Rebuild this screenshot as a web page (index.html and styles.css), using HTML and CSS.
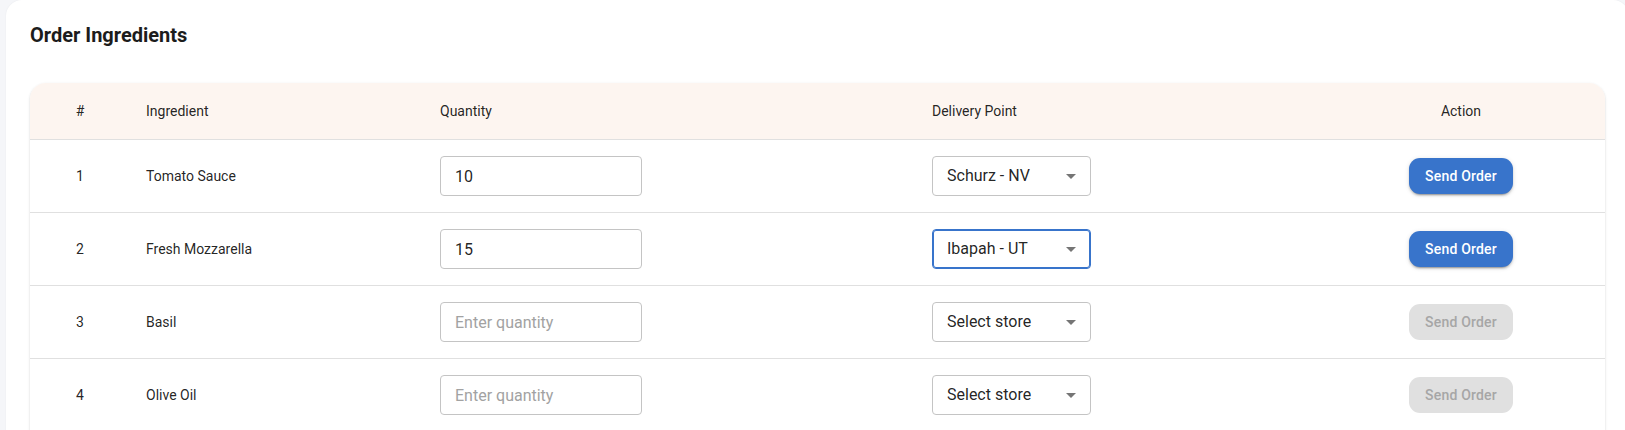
FILE: index.html
```html
<!DOCTYPE html>
<html lang="en">
<head>
<meta charset="utf-8">
<title>Order Ingredients</title>
<link rel="stylesheet" href="styles.css">
</head>
<body>
<div class="card">
  <h2 class="title">Order Ingredients</h2>
  <div class="table-wrap">
    <table class="orders">
      <colgroup>
        <col class="c-num"><col class="c-ing"><col class="c-qty"><col class="c-del"><col class="c-act">
      </colgroup>
      <thead>
        <tr>
          <th class="center">#</th>
          <th>Ingredient</th>
          <th>Quantity</th>
          <th>Delivery Point</th>
          <th class="center">Action</th>
        </tr>
      </thead>
      <tbody>
        <tr>
          <td class="center">1</td>
          <td>Tomato Sauce</td>
          <td><input class="qty" type="text" value="10" placeholder="Enter quantity"></td>
          <td><div class="select"><span>Schurz - NV</span><svg class="arrow" viewBox="0 0 24 24" width="24" height="24"><path d="M7 10l5 5 5-5z"/></svg></div></td>
          <td class="center"><button class="btn">Send Order</button></td>
        </tr>
        <tr>
          <td class="center">2</td>
          <td>Fresh Mozzarella</td>
          <td><input class="qty" type="text" value="15" placeholder="Enter quantity"></td>
          <td><div class="select focused"><span>Ibapah - UT</span><svg class="arrow" viewBox="0 0 24 24" width="24" height="24"><path d="M7 10l5 5 5-5z"/></svg></div></td>
          <td class="center"><button class="btn">Send Order</button></td>
        </tr>
        <tr>
          <td class="center">3</td>
          <td>Basil</td>
          <td><input class="qty" type="text" value="" placeholder="Enter quantity"></td>
          <td><div class="select"><span>Select store</span><svg class="arrow" viewBox="0 0 24 24" width="24" height="24"><path d="M7 10l5 5 5-5z"/></svg></div></td>
          <td class="center"><button class="btn" disabled>Send Order</button></td>
        </tr>
        <tr>
          <td class="center">4</td>
          <td>Olive Oil</td>
          <td><input class="qty" type="text" value="" placeholder="Enter quantity"></td>
          <td><div class="select"><span>Select store</span><svg class="arrow" viewBox="0 0 24 24" width="24" height="24"><path d="M7 10l5 5 5-5z"/></svg></div></td>
          <td class="center"><button class="btn" disabled>Send Order</button></td>
        </tr>
      </tbody>
    </table>
  </div>
</div>
</body>
</html>
```

FILE: styles.css
```css
html, body {
  margin: 0;
  padding: 0;
}
body {
  background: #f5f6f9;
  font-family: Roboto, "Liberation Sans", Arial, sans-serif;
  color: rgba(0, 0, 0, 0.87);
  overflow: hidden;
}
.card {
  margin-left: 6px;
  width: 1623px;
  box-sizing: border-box;
  background: #ffffff;
  border-radius: 16px;
  padding: 19px 24px 24px 24px;
  box-shadow: 0 0 2px rgba(0, 0, 0, 0.06);
}
.title {
  margin: 0 0 32px 0;
  font-size: 20px;
  line-height: 32px;
  font-weight: 700;
  color: #1c1c1c;
}
.table-wrap {
  background: #ffffff;
  border-radius: 16px;
  overflow: hidden;
  padding-bottom: 24px;
  box-shadow: 0px 2px 1px -1px rgba(0,0,0,0.2), 0px 1px 1px 0px rgba(0,0,0,0.14), 0px 1px 3px 0px rgba(0,0,0,0.12);
}
.orders {
  width: 1575px;
  border-collapse: separate;
  border-spacing: 0;
  table-layout: fixed;
}
.c-num { width: 100px; }
.c-ing { width: 294px; }
.c-qty { width: 492px; }
.c-del { width: 401px; }
.c-act { width: 288px; }
.orders thead tr {
  background: #fdf5f0;
}
.orders th,
.orders td {
  padding: 16px;
  font-size: 14px;
  line-height: 24px;
  font-weight: 400;
  text-align: left;
  border-bottom: 1px solid #e0e0e0;
  color: rgba(0, 0, 0, 0.87);
  vertical-align: middle;
}
.orders .center {
  text-align: center;
}
.qty {
  display: block;
  width: 202px;
  height: 40px;
  box-sizing: border-box;
  border: 1px solid #c4c4c4;
  border-radius: 4px;
  padding: 8.5px 14px;
  font-family: Roboto, "Liberation Sans", Arial, sans-serif;
  font-size: 16px;
  color: rgba(0, 0, 0, 0.87);
  outline: none;
  background: #fff;
}
.qty::placeholder {
  color: #a2a2a2;
  opacity: 1;
}
.select {
  position: relative;
  width: 159px;
  height: 40px;
  box-sizing: border-box;
  border: 1px solid #c4c4c4;
  border-radius: 4px;
  padding: 0 32px 0 14px;
  display: flex;
  align-items: center;
  font-size: 16px;
  color: rgba(0, 0, 0, 0.87);
}
.select.focused {
  border-color: #3874cb;
  box-shadow: inset 0 0 0 1px #3874cb;
}
.arrow {
  position: absolute;
  right: 7px;
  top: 7px;
  fill: rgba(0, 0, 0, 0.54);
}
.btn {
  display: inline-block;
  height: 36px;
  padding: 0 16px;
  border: none;
  border-radius: 11px;
  background: #3874cb;
  color: #ffffff;
  font-family: Roboto, "Liberation Sans", Arial, sans-serif;
  font-size: 14px;
  font-weight: 500;
  letter-spacing: 0.2px;
  box-shadow: 0px 3px 1px -2px rgba(0,0,0,0.2), 0px 2px 2px 0px rgba(0,0,0,0.14), 0px 1px 5px 0px rgba(0,0,0,0.12);
  vertical-align: middle;
}
.btn:disabled {
  background: #e0e0e0;
  color: #a6a6a6;
  box-shadow: none;
}
```
